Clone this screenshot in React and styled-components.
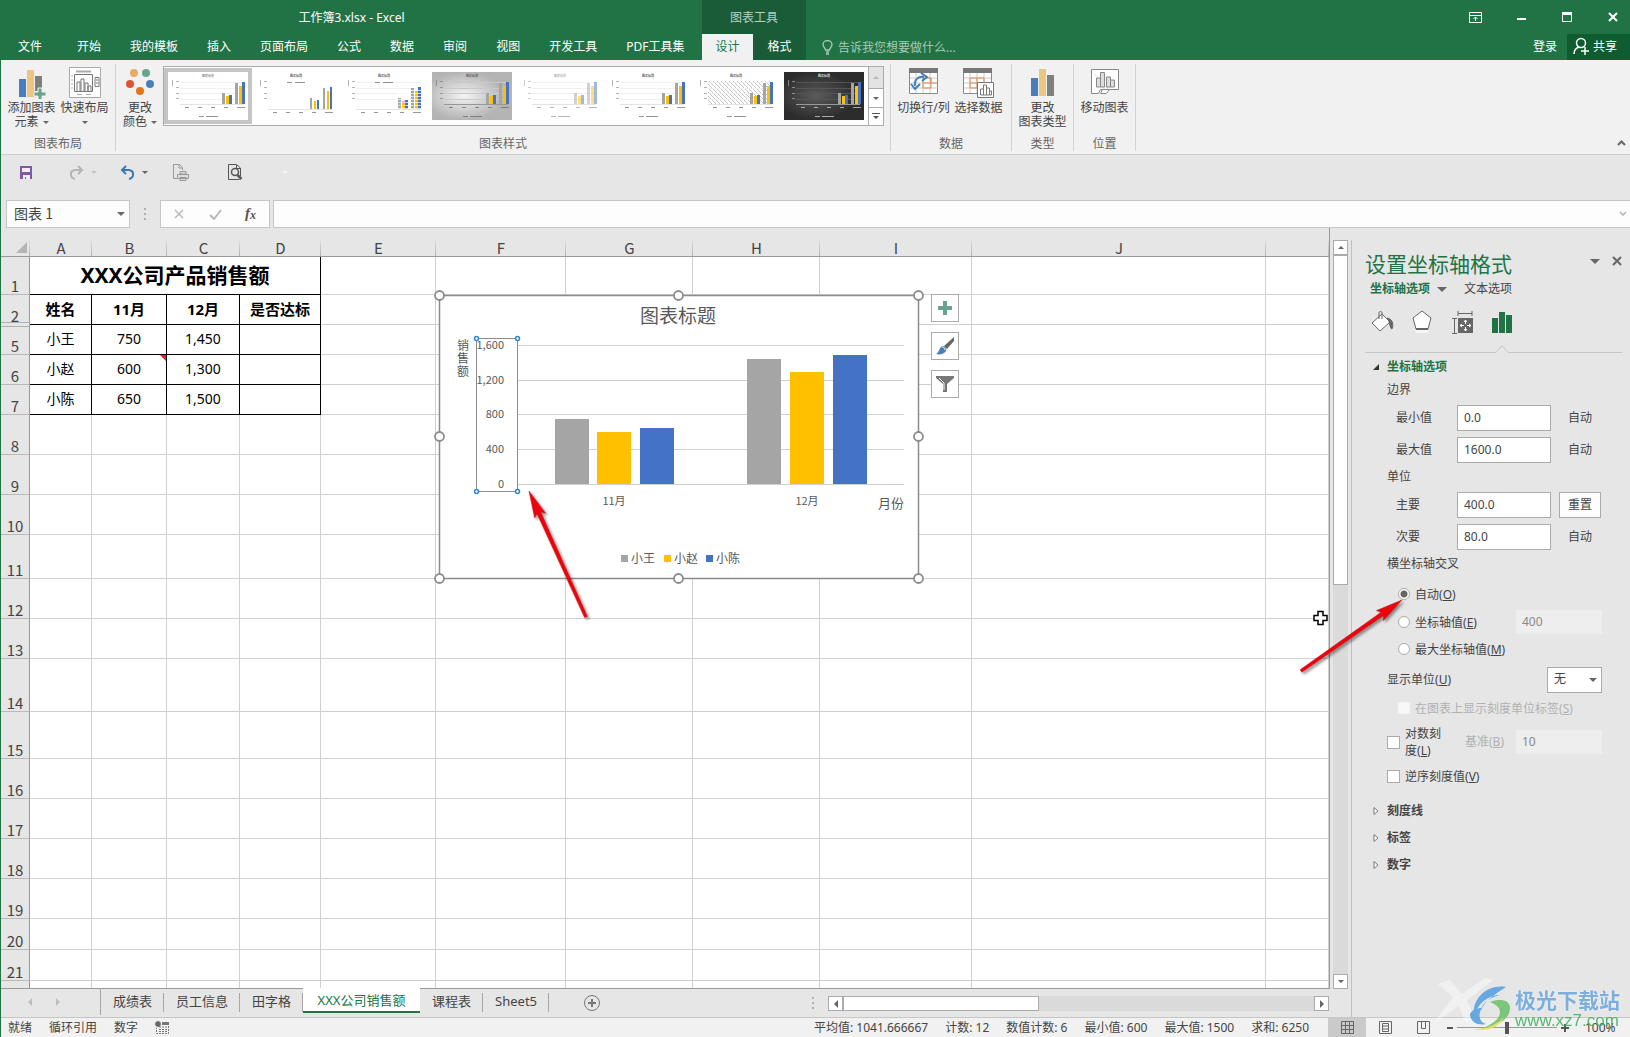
import React from "react";
import styled, { createGlobalStyle, css } from "styled-components";

const ui = `"Noto Sans", "Noto Sans CJK SC", sans-serif`;
const cjk = `"Noto Sans CJK SC", sans-serif`;

const GlobalStyle = createGlobalStyle`
  * { box-sizing: border-box; }
  body { margin: 0; font-family: ${ui}; font-size: 12px; color: #444; background: #e6e6e6; }
  button, input, select { font: inherit; color: inherit; margin: 0; }
  button { border: 0; padding: 0; background: none; white-space: nowrap; }
`;

/* ---------- frame ---------- */

const Window = styled.div`
  position: relative;
  display: flex;
  flex-direction: column;
  height: 100vh;
  overflow: hidden;
  border-left: 1px solid #217346;
`;

const Header = styled.header`
  display: grid;
  grid-template-columns: 701px 104px 1fr;
  grid-template-rows: 34px 26px;
  flex: none;
  background: #217346;
  color: #fff;
`;

const Title = styled.div`
  display: flex;
  align-items: center;
  justify-content: center;
`;

const ContextTitle = styled(Title)`
  background: #1a5c38;
  color: #b5d3c2;
`;

const WindowButtons = styled.div`
  display: flex;
  justify-content: flex-end;
  align-items: center;
  button { width: 46px; height: 32px; display: grid; place-items: center; }
  button:last-child { width: 34px; margin-left: 6px; }
`;

const Tabs = styled.nav`
  display: flex;
  gap: 1px;
`;

const Tab = styled.button`
  padding: 0 ${(p) => (p.$file ? 17 : 14)}px 2px;
  margin-right: ${(p) => (p.$file ? 3 : 0)}px;
`;

const ContextTabs = styled.nav`
  display: grid;
  grid-template-columns: 51px 53px;
  background: #1a5c38;
`;

const ContextTab = styled.button`
  padding-bottom: 2px;
  background: ${(p) => (p.$active ? "#f1f1f1" : "transparent")};
  color: ${(p) => (p.$active ? "#217346" : "#fff")};
`;

const HeaderTools = styled.div`
  display: flex;
  align-items: stretch;
`;

const TellMe = styled.button`
  display: flex;
  align-items: center;
  gap: 5px;
  padding-left: 16px;
  margin-right: auto;
  color: #a6cbb5;
`;

const SignIn = styled.button`
  padding-bottom: 2px;
`;

const Share = styled.button`
  display: flex;
  align-items: center;
  gap: 4px;
  width: 63px;
  margin-left: 10px;
  padding: 0 0 2px 6px;
  background: #0e5c2f;
`;

/* ---------- ribbon ---------- */

const Ribbon = styled.section`
  display: flex;
  flex: none;
  height: 95px;
  padding: 4px 0 3px;
  background: #f1f1f1;
  border-bottom: 1px solid #cfcfcf;
`;

const Group = styled.div`
  display: flex;
  flex-direction: column;
  padding: 0 ${(p) => p.$pad || 5}px;
  border-right: 1px solid #d2d2d2;
`;

const GroupBody = styled.div`
  display: flex;
  flex: 1;
`;

const GroupLabel = styled.div`
  text-align: center;
  line-height: 14px;
  color: #666;
`;

const BigButton = styled.button`
  display: flex;
  flex-direction: column;
  align-items: center;
  width: ${(p) => p.$w || 53}px;
  padding-top: 3px;
  line-height: 14px;
  svg.pic { height: 32px; margin-bottom: 2px; }
`;

const Line = styled.span`
  display: flex;
  align-items: center;
  gap: 4px;
  height: 14px;
`;

const Gallery = styled.div`
  display: flex;
  height: 60px;
  margin-top: 2px;
  border: 1px solid #ababab;
  background: #fff;
`;

const Thumb = styled.button`
  width: 88px;
  height: 56px;
  margin-top: 1px;
  border: 4px solid ${(p) => (p.$on ? "#c5c5c5" : "#fff")};
  svg { display: block; }
`;

const GalleryScroll = styled.div`
  display: grid;
  grid-template-rows: 21px 19px 18px;
  width: 15px;
  border-left: 1px solid #ababab;
  button { display: grid; place-items: center; }
  button + button { border-top: 1px solid #ababab; }
  button:first-child { background: #e3e3e3; }
`;

const Spacer = styled.div`
  flex: 1;
`;

const Collapse = styled.button`
  align-self: flex-end;
  width: 17px;
  height: 16px;
  display: grid;
  place-items: center;
`;

/* ---------- quick access + formula bar ---------- */

const QuickBar = styled.section`
  display: flex;
  flex: none;
  height: 45px;
  padding: 8px 0 0 18px;
`;

const QuickItem = styled.div`
  display: flex;
  align-items: center;
  gap: 7px;
  width: ${(p) => p.$w}px;
  height: 18px;
  button { display: grid; place-items: center; }
`;

const FormulaBar = styled.section`
  display: flex;
  flex: none;
  height: 28px;
  padding-left: 5px;
`;

const boxed = css`
  background: #fdfdfd;
  border: 1px solid #c6c6c6;
`;

const NameBox = styled.label`
  ${boxed}
  display: flex;
  align-items: center;
  width: 124px;
  padding-right: 4px;
  input { width: 100px; flex: 1; border: 0; background: none; padding: 0 0 2px 7px; font: 14px ${cjk}; outline: 0; }
`;

const Dots = styled.div`
  display: grid;
  place-items: center;
  width: ${(p) => p.$w}px;
`;

const FxBox = styled.div`
  ${boxed}
  display: grid;
  grid-template-columns: repeat(3, 36px);
  width: 110px;
  margin-right: 3px;
  button { display: grid; place-items: center; }
`;

const FormulaInput = styled.label`
  ${boxed}
  display: flex;
  align-items: center;
  flex: 1;
  border-right: 0;
  padding-right: 3px;
  input { flex: 1; border: 0; background: none; outline: 0; }
`;

/* ---------- workspace ---------- */

const Workspace = styled.main`
  display: flex;
  flex: 1;
  min-height: 0;
`;

const Book = styled.section`
  display: flex;
  flex-direction: column;
  flex: 1;
  min-width: 0;
`;

const SheetRow = styled.div`
  display: flex;
  flex: 1;
  min-height: 0;
`;

const Sheet = styled.div`
  position: relative;
  flex: 1;
  min-width: 0;
  overflow: hidden;
  border-right: 1px solid #999;
  border-bottom: 1px solid #999;
`;

const Grid = styled.table`
  width: 100%;
  table-layout: fixed;
  border-collapse: separate;
  border-spacing: 0;
  background: #fff;
  th { padding: 0; }
`;

const ColHead = styled.th`
  height: 29px;
  padding-top: 11px !important;
  font: 15px/16px ${cjk};
  color: #444;
  background: linear-gradient(#e6e6e6 35%, #b1b1b1) right / 1px 100% no-repeat, #e6e6e6;
  border-bottom: 1px solid #999;
`;

const Corner = styled(ColHead)`
  text-align: right;
  svg { display: block; margin: 0 3px 0 auto; }
`;

const RowHead = styled.th`
  height: ${(p) => p.$h}px;
  vertical-align: bottom;
  font: 15px/16px ${cjk};
  color: #444;
  background: #e6e6e6;
  border-right: 1px solid #999;
  border-bottom: 1px solid #b9b9b9;
  ${(p) =>
    p.$beforeHidden &&
    css`
      border-bottom-color: #e6e6e6;
      background: linear-gradient(to top, #e6e6e6 1px, #b1b1b1 1px, #b1b1b1 2px, #e6e6e6 2px);
    `}
  ${(p) =>
    p.$afterHidden &&
    css`
      background: linear-gradient(#e6e6e6 1px, #b1b1b1 1px, #b1b1b1 2px, #e6e6e6 2px);
    `}
`;

const Cell = styled.td`
  padding: 0 0 2px;
  border-right: 1px solid #d0d0d0;
  border-bottom: 1px solid #d0d0d0;
  ${(p) =>
    p.$filled &&
    css`
      position: relative;
      border-color: #000;
      color: #000;
      text-align: center;
      font-size: ${p.$size || 14}px;
      font-weight: ${p.$bold ? 700 : 400};
      line-height: 20px;
    `}
`;

const NoteMark = styled.i`
  position: absolute;
  top: 0;
  right: 0;
  border-top: 6px solid #e0202c;
  border-left: 6px solid transparent;
`;

const ChartObject = styled.div`
  position: absolute;
  left: 431px;
  top: 61px;
  svg { display: block; overflow: visible; }
`;

const ChartTools = styled.div`
  position: absolute;
  left: 930px;
  top: 66px;
  display: grid;
  gap: 10px;
  button { width: 28px; height: 28px; border: 1px solid #ababab; background: #fff; display: grid; place-items: center; }
`;

const SheetArrow = styled.svg`
  position: absolute;
  left: 520px;
  top: 256px;
`;

const Cursor = styled.svg`
  position: absolute;
  right: 0;
  top: 382px;
`;

const VScroll = styled.div`
  display: flex;
  flex-direction: column;
  width: 15px;
  margin: 12px 3px 0 3px;
  background: #dadada;
`;

const ScrollButton = styled.button`
  flex: none;
  display: grid;
  place-items: center;
  width: 15px;
  height: 15px;
  border: 1px solid #ababab;
  background: #fff;
`;

const VThumb = styled.div`
  flex: 0 0 44%;
  margin-bottom: auto;
  background: #fff;
  border: 1px solid #ababab;
`;

const BottomBar = styled.div`
  display: flex;
  flex: none;
  height: 28px;
`;

const SheetNav = styled.div`
  display: flex;
  justify-content: center;
  gap: 14px;
  width: 100px;
  height: 26px;
  padding-right: 14px;
  border-right: 1px solid #a6a6a6;
  button { display: grid; place-items: center; width: 14px; }
`;

const SheetTab = styled.button`
  position: relative;
  height: 24px;
  padding: 0 12px;
  font-size: 13px;
  line-height: 20px;
  ${(p) =>
    p.$active
      ? css`
          width: 117px;
          margin-top: -1px;
          height: 25px;
          background: #fff;
          color: #217346;
          border-bottom: 2px solid #217346;
        `
      : css`
          background: linear-gradient(#a6a6a6, #a6a6a6) right 4px / 1px 19px no-repeat;
        `}
`;

const AddSheet = styled.button`
  display: grid;
  place-items: center;
  width: 18px;
  height: 28px;
  margin-left: 34px;
`;

const HScroll = styled.div`
  display: flex;
  width: 501px;
  height: 15px;
  margin: 7px 22px 0 8px;
  background: #dadada;
`;

const HThumb = styled.div`
  width: 196px;
  margin-right: auto;
  background: #fff;
  border: 1px solid #ababab;
`;

/* ---------- format pane ---------- */

const Pane = styled.aside`
  position: relative;
  width: 279px;
  margin-top: 12px;
  padding: 8px 8px 0 13px;
  border-left: 1px solid #c0c0c0;
  line-height: 16px;
`;

const PaneTitle = styled.div`
  display: flex;
  align-items: center;
  gap: 12px;
  height: 32px;
  h2 { flex: 1; margin: 0; font-size: 21px; font-weight: 400; color: #217346; line-height: 32px; white-space: nowrap; }
  button { display: grid; place-items: center; height: 20px; margin-bottom: 6px; }
`;

const PaneTabs = styled.div`
  display: flex;
  align-items: center;
  height: 16px;
  margin-top: 1px;
  padding-left: 5px;
  button { display: flex; align-items: center; gap: 7px; margin-right: 17px; line-height: 16px; }
  button:first-child { color: #217346; font-weight: 700; }
`;

const PaneIcons = styled.div`
  display: flex;
  gap: 16px;
  height: 24px;
  margin-top: 13px;
  padding-left: 5px;
  button { width: 24px; }
`;

const Notch = styled.div`
  display: flex;
  align-items: flex-end;
  height: 10px;
  margin: 9px 0 6px;
  &::before, &::after { content: ""; height: 1px; background: #c6c6c6; width: 130px; }
  &::after { flex: 1; }
`;

const Section = styled.button`
  display: flex;
  align-items: center;
  gap: 8px;
  width: 100%;
  height: 16px;
  margin-bottom: ${(p) => (p.$open ? 7 : 11)}px;
  padding-left: 8px;
  font-weight: 700;
  line-height: 16px;
  color: ${(p) => (p.$open ? "#217346" : "#444")};
  svg { flex: none; }
`;

const SubHead = styled.div`
  height: 16px;
  margin-bottom: 7px;
  padding-left: 22px;
`;

const Field = styled.div`
  display: grid;
  grid-template-columns: 61px 94px 58px;
  align-items: center;
  height: 26px;
  margin-bottom: 6px;
  padding-left: 31px;
  > :last-child { justify-self: center; }
`;

const TextBox = styled.input`
  width: 94px;
  height: 26px;
  padding: 0 6px 2px;
  border: 1px solid #ababab;
  background: #fff;
  &:disabled { width: 86px; height: 24px; border: 0; background: #eee; color: #888; }
`;

const ResetButton = styled.button`
  width: 42px;
  height: 26px;
  border: 1px solid #ababab;
  background: #fdfdfd;
`;

const Choice = styled.div`
  display: flex;
  align-items: center;
  justify-content: space-between;
  height: ${(p) => p.$h || 24}px;
  margin-bottom: ${(p) => p.$gap || 3}px;
  padding: 0 20px 0 ${(p) => p.$indent || 22}px;
  color: ${(p) => (p.$off ? "#b1b1b1" : "#444")};
`;

const Label = styled.label`
  display: flex;
  align-items: center;
  gap: 5px;
  line-height: 17px;
  white-space: nowrap;
`;

const BaseLabel = styled.label`
  margin: 0 12px 0 auto;
  color: #b1b1b1;
`;

const Wrapped = styled.span`
  width: 37px;
  white-space: normal;
`;

const Tick = styled.input`
  appearance: none;
  flex: none;
  width: 13px;
  height: 13px;
  margin: 0;
  background: #fff;
  border: 1px solid #ababab;
  &:disabled { width: 12px; height: 12px; border-color: #f4f4f4; background: #f8f8f8; }
`;

const Radio = styled.input`
  appearance: none;
  flex: none;
  width: 12px;
  height: 12px;
  margin: 0;
  border: 1px solid #ababab;
  border-radius: 50%;
  background: #fff;
  &:checked { background: radial-gradient(circle, #666 0 3px, #fff 4px); }
`;

const SelectWrap = styled.div`
  position: relative;
  width: 55px;
  height: 26px;
  select { appearance: none; width: 100%; height: 100%; padding: 0 6px 2px; border: 1px solid #ababab; border-radius: 0; background: #fff; }
  svg { position: absolute; right: 5px; top: 11px; }
`;

const Gap = styled.div`
  height: 8px;
`;

const PaneArrow = styled.svg`
  position: absolute;
  left: -56px;
  top: 356px;
  pointer-events: none;
`;

/* ---------- status bar ---------- */

const Status = styled.footer`
  display: flex;
  align-items: center;
  flex: none;
  height: 20px;
  padding-left: 7px;
  gap: 17px;
  background: #f1f1f1;
  border-top: 1px solid #c6c6c6;
  line-height: 16px;
  white-space: nowrap;
`;

const Views = styled.div`
  display: flex;
  height: 19px;
  margin-left: 2px;
  button { width: 38px; display: grid; place-items: center; }
  button:first-child { background: #cacaca; }
`;

const Zoom = styled.label`
  display: flex;
  align-items: center;
  flex: none;
  gap: 4px;
  width: 183px;
  margin-left: -12px;
  input { appearance: none; width: 100px; height: 12px; margin: 0; background: linear-gradient(#999, #999) center / 100% 1px no-repeat; }
  input::-webkit-slider-thumb { appearance: none; width: 4px; height: 12px; background: #555; }
  output { margin-left: 12px; }
`;

const Watermark = styled.div`
  position: absolute;
  right: 10px;
  bottom: 5px;
  display: flex;
  align-items: flex-end;
  pointer-events: none;
  opacity: 0.85;
`;

const WatermarkText = styled.div`
  display: grid;
  strong { font: 700 21px/22px ${cjk}; color: #6aa5dd; text-shadow: 0 0 2px #fff; }
  span { font: 17px/22px "Liberation Sans", sans-serif; color: #3dae5e; }
`;

/* ---------- drawings ---------- */

const Caret = ({ w = 8, c = "#666", dir = "down" }) => {
  const h = w / 2;
  const paths = {
    down: [w, h, `M0 0H${w}L${h} ${h}z`],
    up: [w, h, `M0 ${h}H${w}L${h} 0z`],
    left: [h, w, `M${h} 0V${w}L0 ${h}z`],
    right: [h, w, `M0 0V${w}L${h} ${h}z`],
  };
  const [a, b, d] = paths[dir];
  return (
    <svg width={a} height={b} aria-hidden="true">
      <path d={d} fill={c} />
    </svg>
  );
};

const AddElementIcon = () => (
  <svg className="pic" width="30" height="32">
    <path d="M2 12h7v18H2z" fill="#4a7ebb" />
    <path d="M10 3h7v27h-7z" fill="#ecc580" />
    <path d="M18 9h7v15h-7z" fill="#7f7f7f" />
    <path d="M21 21h4v4h4v4h-4v4h-4v-4h-4v-4h4z" fill="#68a490" stroke="#f1f1f1" />
  </svg>
);

const QuickLayoutIcon = () => (
  <svg className="pic" width="32" height="32" fill="none" stroke="#777">
    <path d="M.5.500h31v30H.5z" fill="#fff" stroke="#aaa" />
    <path d="M7 4.500h15" strokeWidth="2" stroke="#aaa" />
    <path d="M5.500 7.500h18v17h-18zM8 24v-9h3v9M12 24V12h3v12M16 24v-8h3v8M19 24v-5h3v5" />
    <path d="M26 10.500h4v9h-4zM27 13h2M27 16h2" />
    <path d="M2 9h2M2 13h2M2 17h2M2 21h2M8 27.500h5M17 27.500h5" stroke="#aaa" />
  </svg>
);

const ColorsIcon = () => (
  <svg className="pic" width="30" height="32">
    <circle cx="9" cy="6" r="4" fill="#e8ad63" />
    <circle cx="21" cy="6" r="4" fill="#68a490" />
    <circle cx="5" cy="17" r="4" fill="#dc5533" />
    <circle cx="25" cy="17" r="4" fill="#4a7ebb" />
    <circle cx="15" cy="24" r="4" fill="#e0751b" />
  </svg>
);

const tableBase = (
  <>
    <path d="M1.500 3.500h28v23h-28z" fill="#fff" stroke="#8a8a8a" />
    <path d="M1 1h29v5H1z" fill="#777" />
  </>
);

const SwitchIcon = () => (
  <svg className="pic" width="31" height="32" fill="none">
    {tableBase}
    <path d="M2 11h27M2 16h27M2 21h27M8 6v20M15 6v20M22 6v20" stroke="#c9c9c9" />
    <path d="M15 11h8v5h6M15 11v10h8v-10M15 16h8" stroke="#e38b50" />
    <path d="M7 19C6 13 10 9 16 10" stroke="#3f7fc0" strokeWidth="2" />
    <path d="M13 6l6 4-5 4M3 17l4 5 5-5" stroke="#3f7fc0" strokeWidth="2" />
  </svg>
);

const SelectDataIcon = () => (
  <svg className="pic" width="33" height="32" fill="none">
    {tableBase}
    <path d="M2 11h27M2 16h27M2 21h27M8 6v20M15 6v20M22 6v20" stroke="#c9c9c9" />
    <path d="M8 11h14v5M8 11v10h7M15 11v10M8 16h14" stroke="#e38b50" />
    <path d="M15.500 15.500h16v15h-16z" fill="#fff" stroke="#777" />
    <path d="M18.500 28v-6h3v6zM21.500 28V18h3v10zM24.500 28v-7h3v7zM27.500 28v-4h2v4z" stroke="#777" />
  </svg>
);

const ChartTypeIcon = () => (
  <svg className="pic" width="26" height="32">
    <path d="M1 11h7v18H1z" fill="#4a7ebb" />
    <path d="M9 2h7v27H9z" fill="#ecc580" />
    <path d="M17 8h7v21h-7z" fill="#7f7f7f" />
  </svg>
);

const MoveChartIcon = () => (
  <svg className="pic" width="30" height="32" fill="none" stroke="#888">
    <path d="M1.500 2.500h27v20h-9l-3 4h-6l2-4M1.500 2.500v24h7l2-4h9" fill="#fff" />
    <path d="M6.500 20v-9h4v9zM10.500 20V5.500h4V20zM16.500 20V10h4v10zM20.500 20v-7h4v7z" fill="#ddd" />
  </svg>
);

const MiniChart = ({ i }) => {
  const dark = i === 7;
  const grey = i === 3;
  const faded = i === 4;
  const striped = i === 2;
  const narrow = i === 1;
  const ink = dark ? "#ddd" : "#666";
  const base = narrow || striped ? 37 : 32;
  const top = narrow || striped ? 5 : 0;
  const bars = [
    [54, 11, "#a5a5a5"], [58, 8, "#ffc000"], [61, 9, "#4472c4"],
    [67, 21, "#a5a5a5"], [71, 18, "#ffc000"], [74, 22, "#4472c4"],
  ];
  return (
    <svg width="80" height="48">
      <defs>
        <radialGradient id={`glow${i}`} cx=".4">
          <stop offset="0" stopColor={dark ? "#5a5a5a" : "#f4f4f4"} />
          <stop offset="1" stopColor={dark ? "#2c2c2c" : "#b4b4b4"} />
        </radialGradient>
        <pattern id={`hatch${i}`} width="4" height="4" patternUnits="userSpaceOnUse">
          <path d="M0 0l4 4" stroke="#c4c4c4" />
        </pattern>
      </defs>
      <rect width="80" height="48" fill={dark || grey ? `url(#glow${i})` : "#fff"} />
      {i === 6 && <rect x="12" y="9" width="64" height="23" fill={`url(#hatch${i})`} />}
      {!narrow && [10, 16, 21, 27].map((y) => (
        <path key={y} d={`M12 ${y}.500h64`} stroke={dark ? "#555" : grey ? "#c9c9c9" : "#f0f0f0"} />
      ))}
      <path d={`M12 ${base}.500h64`} stroke={dark || grey ? "#999" : "#e4e4e4"} />
      <g fill={faded ? "#999" : ink} fontFamily="Noto Sans CJK SC" fontSize="3">
        <text x="34" y="5" fontSize="3" fontWeight={i === 0 || faded ? 400 : 700}>图表标题</text>
        <path d="M4 8h1v6H4zM8 9h3v1H8zM8 15h3v1H8zM8 21h3v1H8zM8 26h3v1H8z" opacity=".5" />
        <path d={`M17 ${base + 3}h4v1h-4zM30 ${base + 3}h4v1h-4zM43 ${base + 3}h4v1h-4zM56 ${base + 3}h4v1h-4zM69 ${base + 3}h8v1h-8z`} opacity=".7" />
        <path d={top ? "M31 10h5v1h-5zM39 10h10v1H39z" : "M31 44h5v1h-5zM38 44h12v1H38z"} opacity=".7" />
      </g>
      {bars.map(([x, h, c]) => (
        <rect key={x} x={x} y={base - h} width={narrow ? 2 : 3} height={h} fill={c} opacity={faded ? 0.5 : 1} />
      ))}
      {striped && [0, 3, 6, 9, 12, 15, 18].map((d) => <path key={d} d={`M53 ${36 - d}.500h25`} stroke="#fff" opacity=".7" />)}
    </svg>
  );
};

const SaveIcon = () => (
  <svg width="15" height="15" fill="none" stroke="#8058a8" strokeWidth="2">
    <path d="M2 2h10v11H2z" fill="#f2eef6" />
    <path d="M1 7h12v7H1z" fill="#8058a8" stroke="none" />
    <path d="M4 10h7v4H7v-2H6v2H4z" fill="#f2eef6" stroke="none" />
  </svg>
);

const UndoIcon = ({ flip, c }) => (
  <svg width="15" height="15" fill="none" stroke={c} strokeWidth="2">
    <g transform={flip ? "translate(15 0) scale(-1 1)" : undefined}>
      <path d="M2 5h7c6 1 5 8 0 9M6 1L2 5l4 4" />
    </g>
  </svg>
);

const PrintIcon = () => (
  <svg width="18" height="18" fill="none" stroke="#999">
    <path d="M5 15.500H1.500v-14h6l3 3V7M7 1.500V5h3" />
    <path d="M8 8.500h6V11H8zM5.500 11.500h11v4h-11zM8 14.500h6v3H8z" fill="#ddd" />
  </svg>
);

const PreviewIcon = () => (
  <svg width="15" height="18" fill="none" stroke="#555">
    <path d="M12.500 13V5l-4-3.500h-8v15h11M8.500 2v3.500H12" />
    <circle cx="7" cy="9" r="3.500" strokeWidth="1.500" />
    <path d="M9.500 12l4 4" strokeWidth="2.500" />
  </svg>
);

const Arrow = ({ from, to, id }) => {
  const [x1, y1] = from;
  const [x2, y2] = to;
  const len = Math.hypot(x2 - x1, y2 - y1);
  const ux = (x2 - x1) / len;
  const uy = (y2 - y1) / len;
  const at = (d, s) => `${x2 - ux * d - uy * s} ${y2 - uy * d + ux * s}`;
  return (
    <g fill="#f0060c" stroke="#b01014" strokeWidth=".5" filter={`url(#${id})`}>
      <defs>
        <filter id={id} x="-30%" y="-30%" width="160%" height="160%">
          <feDropShadow dx="2" dy="2" stdDeviation="1.5" floodOpacity=".45" />
        </filter>
      </defs>
      <path d={`M${at(0, 0)}L${at(27, 6)}L${at(24, 2)}L${at(len, 1.5)}L${at(len, -1.5)}L${at(24, -2)}L${at(27, -6)}z`} />
    </g>
  );
};

const series = [
  { name: "小王", color: "#a5a5a5", x: [116, 308], v: [750, 1450], lx: 189 },
  { name: "小赵", color: "#ffc000", x: [158, 351], v: [600, 1300], lx: 232 },
  { name: "小陈", color: "#4472c4", x: [201, 394], v: [650, 1500], lx: 274 },
];

const Chart = () => (
  <svg width="494" height="298" fontFamily={cjk} fill="#595959" fontSize="12" role="img" aria-label="图表标题">
    <g transform="translate(7 6)">
      <path d="M.5.500h479v283H.5z" fill="#fff" stroke="#8c8c8c" strokeWidth="1.500" />
      <text x="239" y="28" fontSize="19" textAnchor="middle">图表标题</text>
      {["销", "售", "额"].map((t, n) => (
        <text key={t} x="24" y={55 + n * 13} textAnchor="middle">{t}</text>
      ))}
      {[0, 400, 800, 1200, 1600].map((v) => {
        const y = 189.5 - Math.round((v * 139) / 1600);
        return (
          <g key={v}>
            <path d={`M79 ${y}h386`} stroke="#d0d0d0" />
            <text x="65" y={y + 3.5} fontSize="11" textAnchor="end">{v.toLocaleString("en-US")}</text>
          </g>
        );
      })}
      {series.map((s) => (
        <g key={s.name}>
          {s.v.map((v, n) => (
            <rect key={n} x={s.x[n]} y={189 - Math.round((v * 138) / 1600)} width="34" height={Math.round((v * 138) / 1600)} fill={s.color} />
          ))}
          <rect x={s.lx - 7} y="260" width="7" height="7" fill={s.color} />
          <text x={s.lx + 3} y="268">{s.name}</text>
        </g>
      ))}
      <text x="175" y="210" fontSize="11" textAnchor="middle">11月</text>
      <text x="368" y="210" fontSize="11" textAnchor="middle">12月</text>
      <text x="439" y="213" fontSize="13">月份</text>
      <path d="M37.500 43.500h41v153h-41z" fill="none" stroke="#8c8c8c" />
      {[[37.5, 43.5], [78.5, 43.5], [37.5, 196.5], [78.5, 196.5]].map(([x, y]) => (
        <circle key={`${x}-${y}`} cx={x} cy={y} r="2" fill="#fff" stroke="#2e86d0" strokeWidth="1.500" />
      ))}
      {[[0, 0], [239, 0], [479, 0], [0, 141], [479, 141], [0, 283], [239, 283], [479, 283]].map(([x, y]) => (
        <circle key={`${x}-${y}`} cx={x + 0.5} cy={y + 0.5} r="4.500" fill="#fff" stroke="#8c8c8c" strokeWidth="1.800" />
      ))}
    </g>
  </svg>
);

const SectionMark = ({ open }) => (
  <svg width="6" height="8">
    {open ? <path d="M6 1v6H0z" fill="#333" /> : <path d="M1 .5v7l4-3.500z" fill="#fff" stroke="#777" />}
  </svg>
);

/* ---------- data ---------- */

const menu = ["文件", "开始", "我的模板", "插入", "页面布局", "公式", "数据", "审阅", "视图", "开发工具", "PDF工具集"];
const columns = [["A", 62], ["B", 75], ["C", 73], ["D", 81], ["E", 115], ["F", 130], ["G", 127], ["H", 127], ["I", 152], ["J", 294], ["", null]];
const rows = [
  [1, 38, ["XXX公司产品销售额"]],
  [2, 30, ["姓名", "11月", "12月", "是否达标"]],
  [5, 30, ["小王", "750", "1,450", ""]],
  [6, 30, ["小赵", "600", "1,300", ""]],
  [7, 30, ["小陈", "650", "1,500", ""]],
  [8, 40], [9, 40], [10, 40], [11, 44], [12, 40], [13, 40], [14, 53], [15, 47],
  [16, 40], [17, 40], [18, 40], [19, 40], [20, 31], [21, 31], ["", 31],
];
const sheets = ["成绩表", "员工信息", "田字格", "XXX公司销售额", "课程表", "Sheet5"];
const stats = ["平均值: 1041.666667", "计数: 12", "数值计数: 6", "最小值: 600", "最大值: 1500", "求和: 6250"];

const NumberField = ({ id, label, value, reset }) => (
  <Field>
    <label htmlFor={id}>{label}</label>
    <TextBox id={id} defaultValue={value} />
    {reset ? <ResetButton>重置</ResetButton> : <span>自动</span>}
  </Field>
);

const Key = ({ k }) => <>(<u>{k}</u>)</>;

export default function App() {
  return (
    <Window>
      <GlobalStyle />
      <Header>
        <Title>工作簿3.xlsx - Excel</Title>
        <ContextTitle>图表工具</ContextTitle>
        <WindowButtons>
          <button aria-label="功能区显示选项">
            <svg width="13" height="11" fill="none" stroke="#fff">
              <path d="M.5.500h12v10H.5zM.5 3.500h12M6.500 9V5M4.500 7l2-2 2 2" />
            </svg>
          </button>
          <button aria-label="最小化"><svg width="9" height="6"><path d="M0 4h9v2H0z" fill="#fff" /></svg></button>
          <button aria-label="最大化"><svg width="10" height="10"><path d="M.5.500h9v9h-9z" fill="none" stroke="#fff" /><path d="M0 0h10v3H0z" fill="#fff" /></svg></button>
          <button aria-label="关闭"><svg width="10" height="10"><path d="M1 1l8 8M9 1l-8 8" stroke="#fff" strokeWidth="2" /></svg></button>
        </WindowButtons>
        <Tabs>
          {menu.map((m, i) => <Tab key={m} $file={i === 0}>{m}</Tab>)}
        </Tabs>
        <ContextTabs>
          <ContextTab $active>设计</ContextTab>
          <ContextTab>格式</ContextTab>
        </ContextTabs>
        <HeaderTools>
          <TellMe>
            <svg width="11" height="15" fill="none" stroke="#a6cbb5" strokeWidth="1.300">
              <path d="M3.500 10c0-2-2.500-3-2.500-5.500a4.500 4 0 0 1 9 0C10 7 7.500 8 7.500 10zM4 12h3M4 14h3" />
            </svg>
            告诉我您想要做什么...
          </TellMe>
          <SignIn>登录</SignIn>
          <Share>
            <svg width="16" height="18" fill="none" stroke="#fff" strokeWidth="1.500">
              <circle cx="8" cy="6" r="4.500" />
              <path d="M1 17c0-4 2-6 5-7M12 10v8M8 14h8" />
            </svg>
            共享
          </Share>
        </HeaderTools>
      </Header>

      <Ribbon>
        <Group $pad={4}>
          <GroupBody>
            <BigButton><AddElementIcon /><Line>添加图表</Line><Line>元素 <Caret w={6} /></Line></BigButton>
            <BigButton><QuickLayoutIcon /><Line>快速布局</Line><Line><Caret w={6} /></Line></BigButton>
          </GroupBody>
          <GroupLabel>图表布局</GroupLabel>
        </Group>
        <Group $pad={1}>
          <GroupBody>
            <BigButton $w={46}><ColorsIcon /><Line>更改</Line><Line>颜色 <Caret w={6} /></Line></BigButton>
            <Gallery>
              {[0, 1, 2, 3, 4, 5, 6, 7].map((i) => (
                <Thumb key={i} $on={i === 0} aria-label={`样式 ${i + 1}`}><MiniChart i={i} /></Thumb>
              ))}
              <GalleryScroll>
                <button aria-label="上一行"><Caret w={6} c="#bbb" dir="up" /></button>
                <button aria-label="下一行"><Caret w={6} /></button>
                <button aria-label="其他">
                  <svg width="8" height="7"><path d="M0 0h8v1H0zM1 3h6L4 6z" fill="#555" /></svg>
                </button>
              </GalleryScroll>
            </Gallery>
            <Dots $w={5} />
          </GroupBody>
          <GroupLabel>图表样式</GroupLabel>
        </Group>
        <Group $pad={5}>
          <GroupBody>
            <BigButton $w={55}><SwitchIcon /><Line>切换行/列</Line></BigButton>
            <BigButton $w={55}><SelectDataIcon /><Line>选择数据</Line></BigButton>
          </GroupBody>
          <GroupLabel>数据</GroupLabel>
        </Group>
        <Group $pad={4}>
          <GroupBody>
            <BigButton><ChartTypeIcon /><Line>更改</Line><Line>图表类型</Line></BigButton>
          </GroupBody>
          <GroupLabel>类型</GroupLabel>
        </Group>
        <Group $pad={4}>
          <GroupBody>
            <BigButton><MoveChartIcon /><Line>移动图表</Line></BigButton>
          </GroupBody>
          <GroupLabel>位置</GroupLabel>
        </Group>
        <Spacer />
        <Collapse aria-label="折叠功能区">
          <svg width="9" height="6"><path d="M1 5l3.500-3.500L8 5" fill="none" stroke="#666" strokeWidth="2" /></svg>
        </Collapse>
      </Ribbon>

      <QuickBar>
        <QuickItem $w={50}><button aria-label="保存"><SaveIcon /></button></QuickItem>
        <QuickItem $w={51}>
          <button aria-label="恢复"><UndoIcon flip c="#b5b5b5" /></button>
          <Caret w={6} c="#c4c4c4" />
        </QuickItem>
        <QuickItem $w={52}>
          <button aria-label="撤消"><UndoIcon c="#3c78b4" /></button>
          <Caret w={6} />
        </QuickItem>
        <QuickItem $w={56}><button aria-label="快速打印"><PrintIcon /></button></QuickItem>
        <QuickItem $w={54}><button aria-label="打印预览"><PreviewIcon /></button></QuickItem>
        <QuickItem $w={6}><Caret w={6} c="#f4f4f4" /></QuickItem>
      </QuickBar>

      <FormulaBar>
        <NameBox><input aria-label="名称框" defaultValue="图表 1" /><Caret w={8} /></NameBox>
        <Dots $w={30}>
          <svg width="2" height="12"><path d="M0 0h2v2H0zM0 5h2v2H0zM0 10h2v2H0z" fill="#b0b0b0" /></svg>
        </Dots>
        <FxBox>
          <button aria-label="取消"><svg width="10" height="10"><path d="M1 1l8 8M9 1L1 9" stroke="#b8b8b8" strokeWidth="1.500" /></svg></button>
          <button aria-label="输入"><svg width="13" height="11"><path d="M1 6l4 4 7-9" fill="none" stroke="#b8b8b8" strokeWidth="2" /></svg></button>
          <button aria-label="插入函数">
            <svg width="14" height="16" fontFamily="Liberation Serif, serif" fontStyle="italic" fontWeight="700" fill="#555">
              <text x="1" y="12" fontSize="15">f</text><text x="6" y="13" fontSize="12">x</text>
            </svg>
          </button>
        </FxBox>
        <FormulaInput>
          <input aria-label="编辑栏" />
          <svg width="8" height="6"><path d="M1 1l3 3 3-3" fill="none" stroke="#b0b0b0" strokeWidth="1.500" /></svg>
        </FormulaInput>
      </FormulaBar>

      <Workspace>
        <Book>
          <SheetRow>
            <Sheet>
              <Grid>
                <colgroup>
                  <col width="29" />
                  {columns.map(([n, w]) => <col key={n} width={w || undefined} />)}
                </colgroup>
                <thead>
                  <tr>
                    <Corner><svg width="11" height="11"><path d="M11 0v11H0z" fill="#b4b4b4" /></svg></Corner>
                    {columns.map(([n]) => <ColHead key={n} scope="col">{n}</ColHead>)}
                  </tr>
                </thead>
                <tbody>
                  {rows.map(([n, h, cells]) => (
                    <tr key={n}>
                      <RowHead scope="row" $h={h} $beforeHidden={n === 2} $afterHidden={n === 5}>{n}</RowHead>
                      {n === 1 ? (
                        <Cell $filled $bold $size={21} colSpan={4}>{cells[0]}</Cell>
                      ) : (
                        [0, 1, 2, 3].map((c) => (
                          <Cell key={c} $filled={!!cells} $bold={n === 2} $size={n === 2 ? 15 : 14}>
                            {cells && cells[c]}
                            {n === 6 && c === 1 && <NoteMark />}
                          </Cell>
                        ))
                      )}
                      {columns.slice(4).map(([c]) => <Cell key={c} />)}
                    </tr>
                  ))}
                </tbody>
              </Grid>
              <ChartObject><Chart /></ChartObject>
              <ChartTools>
                <button aria-label="图表元素"><svg width="14" height="14"><path d="M5 0h4v5h5v4H9v5H5V9H0V5h5z" fill="#68a490" /></svg></button>
                <button aria-label="图表样式">
                  <svg width="20" height="20">
                    <path d="M19 1v4l-7 8-3-3z" fill="#666" />
                    <path d="M1 18c3-1 3-6 6-8 3 0 5 2 4 5-2 3-6 4-10 3z" fill="#4a7ebb" />
                    <path d="M7 11c2 0 3 1 3 3" fill="none" stroke="#fff" />
                  </svg>
                </button>
                <button aria-label="图表筛选器">
                  <svg width="18" height="18"><path d="M0 1h18v2l-7 6v8H7V9L0 3z" fill="#777" /><path d="M3 3l5 5v7" fill="none" stroke="#fff" /></svg>
                </button>
              </ChartTools>
              <SheetArrow width="80" height="145"><Arrow id="shadowA" from={[65, 133]} to={[8, 7]} /></SheetArrow>
              <Cursor width="17" height="17">
                <path d="M6 1.500h5v4h4v5h-4v4H6v-4H2v-5h4z" fill="#fff" stroke="#000" strokeWidth="1.500" />
              </Cursor>
            </Sheet>
            <VScroll>
              <ScrollButton aria-label="向上滚动"><Caret w={6} dir="up" /></ScrollButton>
              <VThumb />
              <ScrollButton aria-label="向下滚动"><Caret w={6} /></ScrollButton>
            </VScroll>
          </SheetRow>
          <BottomBar>
            <SheetNav>
              <button aria-label="上一个工作表"><Caret w={8} c="#bdbdbd" dir="left" /></button>
              <button aria-label="下一个工作表"><Caret w={8} c="#bdbdbd" dir="right" /></button>
            </SheetNav>
            {sheets.map((s, i) => <SheetTab key={s} $active={i === 3}>{s}</SheetTab>)}
            <AddSheet aria-label="新工作表">
              <svg width="18" height="18" fill="none" stroke="#777"><circle cx="9" cy="9" r="7.500" /><path d="M9 5v8M5 9h8" strokeWidth="2" /></svg>
            </AddSheet>
            <Spacer />
            <Dots $w={14}>
              <svg width="2" height="12"><path d="M0 0h2v2H0zM0 5h2v2H0zM0 10h2v2H0z" fill="#b0b0b0" /></svg>
            </Dots>
            <HScroll>
              <ScrollButton aria-label="向左滚动"><Caret w={8} dir="left" /></ScrollButton>
              <HThumb />
              <ScrollButton aria-label="向右滚动"><Caret w={8} dir="right" /></ScrollButton>
            </HScroll>
          </BottomBar>
        </Book>

        <Pane>
          <PaneTitle>
            <h2>设置坐标轴格式</h2>
            <button aria-label="窗格选项"><Caret w={10} /></button>
            <button aria-label="关闭窗格"><svg width="10" height="10"><path d="M1 1l8 8M9 1L1 9" stroke="#666" strokeWidth="2" /></svg></button>
          </PaneTitle>
          <PaneTabs>
            <button>坐标轴选项<Caret w={10} /></button>
            <button>文本选项</button>
          </PaneTabs>
          <PaneIcons>
            <button aria-label="填充与线条">
              <svg width="24" height="24" fill="none" stroke="#666">
                <path d="M2 13L12 4l8 8-10 9z" fill="#fff" />
                <path d="M9 9V3c0-2 3-2 3 0v6" />
                <path d="M17 8c5 1 7 5 5 11-3-1-1-6-5-11z" fill="#666" />
              </svg>
            </button>
            <button aria-label="效果">
              <svg width="24" height="24" fill="none" stroke="#666">
                <path d="M12 1l9 7-3 11H6L3 8z" fill="#fff" />
                <path d="M6 19h12" strokeWidth="2" />
                <path d="M6 20l-1 3h14l-1-3z" fill="#f6f6f6" stroke="none" />
              </svg>
            </button>
            <button aria-label="大小与属性">
              <svg width="24" height="24" fill="none" stroke="#666">
                <path d="M8 8h15v15H8z" fill="#666" stroke="none" />
                <path d="M8 3.500h14M8 1v5M22 1v5M4.500 9v14M2 8.500h5M2 23.500h5" />
                <path d="M15.500 10v4M15.500 17v4M10 15.500h4M17 15.500h4M14 12l1.500-2 1.500 2M14 19l1.500 2 1.500-2M12 14l-2 1.500 2 1.500M19 14l2 1.500-2 1.500" stroke="#fff" />
              </svg>
            </button>
            <button aria-label="坐标轴选项">
              <svg width="24" height="24" fill="#217346"><path d="M2 8h6v15H2zM9 2h6v21H9zM16 5h6v18h-6z" /></svg>
            </button>
          </PaneIcons>
          <Notch>
            <svg width="14" height="9"><path d="M0 8.500h1l6-7 6 7h1" fill="none" stroke="#c6c6c6" /></svg>
          </Notch>
          <Section $open><SectionMark open />坐标轴选项</Section>
          <SubHead>边界</SubHead>
          <NumberField id="min" label="最小值" value="0.0" />
          <NumberField id="max" label="最大值" value="1600.0" />
          <SubHead>单位</SubHead>
          <NumberField id="major" label="主要" value="400.0" reset />
          <NumberField id="minor" label="次要" value="80.0" />
          <SubHead>横坐标轴交叉</SubHead>
          <Choice $indent={33} $h={30} $gap={1}>
            <Label><Radio type="radio" name="cross" defaultChecked /><span>自动<Key k="O" /></span></Label>
          </Choice>
          <Choice $indent={33}>
            <Label><Radio type="radio" name="cross" /><span>坐标轴值<Key k="E" /></span></Label>
            <TextBox aria-label="坐标轴值" defaultValue="400" disabled />
          </Choice>
          <Choice $indent={33} $gap={6}>
            <Label><Radio type="radio" name="cross" /><span>最大坐标轴值<Key k="M" /></span></Label>
          </Choice>
          <Choice $h={26} $gap={7}>
            <label htmlFor="unit">显示单位<Key k="U" /></label>
            <SelectWrap>
              <select id="unit" defaultValue="无"><option>无</option></select>
              <Caret w={8} />
            </SelectWrap>
          </Choice>
          <Choice $indent={33} $h={16} $gap={11} $off>
            <Label><Tick type="checkbox" disabled /><span>在图表上显示刻度单位标签<Key k="S" /></span></Label>
          </Choice>
          <Choice $h={30} $gap={11}>
            <Label><Tick type="checkbox" /><Wrapped>对数刻度<Key k="L" /></Wrapped></Label>
            <BaseLabel htmlFor="base">基准<Key k="B" /></BaseLabel>
            <TextBox id="base" defaultValue="10" disabled />
          </Choice>
          <Choice $h={16} $gap={11}>
            <Label><Tick type="checkbox" /><span>逆序刻度值<Key k="V" /></span></Label>
          </Choice>
          <Gap />
          <Section><SectionMark />刻度线</Section>
          <Section><SectionMark />标签</Section>
          <Section><SectionMark />数字</Section>
          <PaneArrow width="115" height="86"><Arrow id="shadowB" from={[5, 75]} to={[106, 4]} /></PaneArrow>
        </Pane>
      </Workspace>

      <Status>
        <span>就绪</span>
        <span>循环引用</span>
        <span>数字</span>
        <svg width="14" height="13" fill="none" stroke="#777">
          <circle cx="3" cy="3" r="2.500" fill="#666" />
          <path d="M7 2.500h6.500v10h-12V7M4 6h8M4 8.500h8M4 10.500h8" strokeDasharray="2 1" />
          <path d="M7 1h7v3H7z" fill="#777" stroke="none" />
        </svg>
        <Spacer />
        {stats.map((s) => <span key={s}>{s}</span>)}
        <Views>
          <button aria-label="普通"><svg width="13" height="13" fill="none" stroke="#666"><path d="M.5.500h12v12H.5zM.5 4.500h12M.5 8.500h12M4.500.500v12M8.500.500v12" /></svg></button>
          <button aria-label="页面布局"><svg width="13" height="13" fill="none" stroke="#666"><path d="M.5.500h12v12H.5zM3.500 2.500h6v8h-6zM4 5h5M4 8h5" /></svg></button>
          <button aria-label="分页预览"><svg width="13" height="13" fill="none" stroke="#666"><path d="M.5.500h12v12H.5zM4.500.500v7h4v-7" /></svg></button>
        </Views>
        <Zoom>
          <svg width="6" height="2"><path d="M0 0h6v2H0z" fill="#555" /></svg>
          <input type="range" min="0" max="100" defaultValue="50" aria-label="缩放" />
          <svg width="8" height="8"><path d="M3 0h2v3h3v2H5v3H3V5H0V3h3z" fill="#555" /></svg>
          <output>100%</output>
        </Zoom>
      </Status>

      <Watermark>
        <svg width="82" height="56" fill="none">
          <path d="M5 8l12-4 12 14L52 2l8 2-26 20 8 20-10 2-6-16L0 48l20-27z" fill="#fff" opacity=".5" />
          <path d="M73 11C55 8 38 22 41 41c3-14 15-22 26-22-12 3-18 9-19 15 6-12 15-16 25-23z" fill="#4f9fe0" />
          <path d="M37 38c0 8 8 12 16 10-6-2-9-8-4-16-6 0-10 2-12 6z" fill="#4f9fe0" />
          <path d="M57 26c10-4 20-2 20 6 0 12-14 19-30 21 12-4 20-10 20-17 0-5-5-8-10-10z" fill="#6cc06a" />
          <path d="M41 53c14 0 24-5 30-12-4 10-16 15-30 12z" fill="#e3e04c" />
        </svg>
        <WatermarkText>
          <strong>极光下载站</strong>
          <span>www.xz7.com</span>
        </WatermarkText>
      </Watermark>
    </Window>
  );
}
